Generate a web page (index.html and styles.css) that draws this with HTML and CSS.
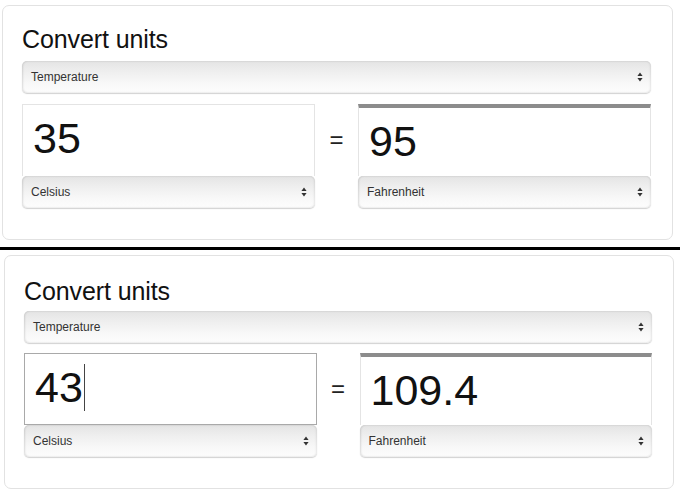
FILE: index.html
```html
<!DOCTYPE html>
<html>
<head>
<meta charset="utf-8">
<link rel="stylesheet" href="styles.css">
</head>
<body>
<div class="card card-a">
  <h2 class="title">Convert units</h2>
  <div class="select wide"><span>Temperature</span>
    <svg class="arrows" width="6" height="10" viewBox="0 0 6 10"><path d="M3 0.5 L5.6 4 L0.4 4 Z M3 9.5 L5.6 6 L0.4 6 Z" fill="#333"/></svg>
  </div>
  <div class="row">
    <div class="col">
      <div class="field">35</div>
      <div class="select"><span>Celsius</span>
        <svg class="arrows" width="6" height="10" viewBox="0 0 6 10"><path d="M3 0.5 L5.6 4 L0.4 4 Z M3 9.5 L5.6 6 L0.4 6 Z" fill="#333"/></svg>
      </div>
    </div>
    <div class="eq">=</div>
    <div class="col">
      <div class="field result">95</div>
      <div class="select"><span>Fahrenheit</span>
        <svg class="arrows" width="6" height="10" viewBox="0 0 6 10"><path d="M3 0.5 L5.6 4 L0.4 4 Z M3 9.5 L5.6 6 L0.4 6 Z" fill="#333"/></svg>
      </div>
    </div>
  </div>
</div>
<div class="divider"></div>
<div class="card card-b">
  <h2 class="title">Convert units</h2>
  <div class="select wide"><span>Temperature</span>
    <svg class="arrows" width="6" height="10" viewBox="0 0 6 10"><path d="M3 0.5 L5.6 4 L0.4 4 Z M3 9.5 L5.6 6 L0.4 6 Z" fill="#333"/></svg>
  </div>
  <div class="row">
    <div class="col">
      <div class="field focused">43<span class="caret"></span></div>
      <div class="select"><span>Celsius</span>
        <svg class="arrows" width="6" height="10" viewBox="0 0 6 10"><path d="M3 0.5 L5.6 4 L0.4 4 Z M3 9.5 L5.6 6 L0.4 6 Z" fill="#333"/></svg>
      </div>
    </div>
    <div class="eq">=</div>
    <div class="col">
      <div class="field result">109.4</div>
      <div class="select"><span>Fahrenheit</span>
        <svg class="arrows" width="6" height="10" viewBox="0 0 6 10"><path d="M3 0.5 L5.6 4 L0.4 4 Z M3 9.5 L5.6 6 L0.4 6 Z" fill="#333"/></svg>
      </div>
    </div>
  </div>
</div>
</body>
</html>
```
FILE: styles.css
```css
html, body {
  margin: 0;
  padding: 0;
  background: #fff;
}
body {
  font-family: "Liberation Sans", Arial, sans-serif;
  color: #111;
  width: 680px;
  height: 500px;
  overflow: hidden;
}
.card {
  border: 1px solid #e2e2e2;
  border-radius: 7px;
  background: #fff;
  padding: 0 21px 31px 19px;
}
.card-a {
  margin: 5px 7px 0 2px;
}
.card-b {
  margin: 5px 6px 0 4px;
}
.title {
  margin: 0;
  font-weight: normal;
  font-size: 25px;
  line-height: 30px;
  padding-top: 18px;
  padding-bottom: 7px;
  color: #111;
  letter-spacing: -0.1px;
}
.card-b .title {
  padding-top: 20px;
  padding-bottom: 5px;
}
.select {
  height: 32px;
  box-sizing: border-box;
  border-radius: 5px;
  background: linear-gradient(#e4e4e4 0%, #efefef 35%, #f8f8f8 70%, #fdfdfd 100%);
  box-shadow: 0 1px 1px rgba(0,0,0,0.18), inset 1px 0 2px rgba(0,0,0,0.12), inset -1px 0 2px rgba(0,0,0,0.08);
  display: flex;
  align-items: center;
  justify-content: space-between;
  padding: 0 8px 0 9px;
  font-size: 12px;
  color: #333;
}
.select.wide {
  margin-bottom: 11px;
}
.card-b .select.wide {
  margin-bottom: 10px;
}
.arrows {
  display: block;
}
.row {
  display: grid;
  grid-template-columns: 1fr 43px 1fr;
  align-items: start;
}
.col {
  display: flex;
  flex-direction: column;
}
.field {
  height: 72px;
  box-sizing: border-box;
  border: 1px solid #e4e4e4;
  border-bottom: none;
  font-size: 43px;
  line-height: 66px;
  padding: 0 0 0 10px;
  color: #111;
  display: flex;
  align-items: flex-start;
}
.field.result {
  border-top: 4px solid #8c8c8c;
}
.field.focused {
  border-color: #a9a9a9;
  border-bottom: 1px solid #a9a9a9;
}
.caret {
  display: inline-block;
  width: 1px;
  height: 47px;
  background: #444;
  margin: 10px 0 0 1px;
}
.eq {
  font-size: 24px;
  text-align: center;
  line-height: 72px;
  color: #222;
}
.divider {
  height: 3px;
  background: #000;
  margin-top: 7px;
}
```
